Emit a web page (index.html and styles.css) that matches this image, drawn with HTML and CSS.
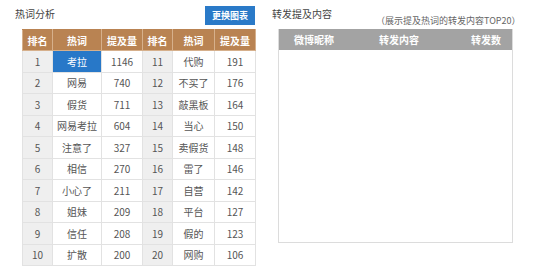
FILE: index.html
```html
<!DOCTYPE html>
<html lang="zh">
<head>
<meta charset="utf-8">
<link rel="stylesheet" href="styles.css">
</head>
<body>
<div class="page">
  <section class="left">
    <div class="lhead">
      <div class="title">热词分析</div>
      <div class="btn">更换图表</div>
    </div>
    <table class="hot">
      <colgroup>
        <col class="c1"><col class="c2"><col class="c3"><col class="c4"><col class="c5"><col class="c6">
      </colgroup>
      <thead>
        <tr><th>排名</th><th>热词</th><th>提及量</th><th>排名</th><th>热词</th><th>提及量</th></tr>
      </thead>
      <tbody>
        <tr><td class="rk">1</td><td class="sel">考拉</td><td>1146</td><td class="rk">11</td><td>代购</td><td>191</td></tr>
        <tr><td class="rk">2</td><td>网易</td><td>740</td><td class="rk">12</td><td>不买了</td><td>176</td></tr>
        <tr><td class="rk">3</td><td>假货</td><td>711</td><td class="rk">13</td><td>敲黑板</td><td>164</td></tr>
        <tr><td class="rk">4</td><td>网易考拉</td><td>604</td><td class="rk">14</td><td>当心</td><td>150</td></tr>
        <tr><td class="rk">5</td><td>注意了</td><td>327</td><td class="rk">15</td><td>卖假货</td><td>148</td></tr>
        <tr><td class="rk">6</td><td>相信</td><td>270</td><td class="rk">16</td><td>雷了</td><td>146</td></tr>
        <tr><td class="rk">7</td><td>小心了</td><td>211</td><td class="rk">17</td><td>自营</td><td>142</td></tr>
        <tr><td class="rk">8</td><td>姐妹</td><td>209</td><td class="rk">18</td><td>平台</td><td>127</td></tr>
        <tr><td class="rk">9</td><td>信任</td><td>208</td><td class="rk">19</td><td>假的</td><td>123</td></tr>
        <tr><td class="rk">10</td><td>扩散</td><td>200</td><td class="rk">20</td><td>网购</td><td>106</td></tr>
      </tbody>
    </table>
  </section>
  <section class="right">
    <div class="rhead">
      <div class="title rtitle">转发提及内容</div>
      <div class="sub">（展示提及热词的转发内容TOP20）</div>
    </div>
    <div class="box">
      <div class="bhead">
        <span class="h1">微博昵称</span>
        <span class="h2">转发内容</span>
        <span class="h3">转发数</span>
      </div>
    </div>
  </section>
</div>
</body>
</html>
```

FILE: styles.css
```css
html, body {
  margin: 0;
  padding: 0;
  background: #fff;
}
body {
  font-family: "Noto Sans CJK SC", "Noto Sans", sans-serif;
  color: #555;
  font-size: 10px;
}
.page {
  display: flex;
  align-items: flex-start;
}
.left {
  width: 240px;
  padding-left: 15px;
}
.lhead {
  display: flex;
  align-items: flex-start;
  justify-content: space-between;
  height: 29px;
}
.title {
  margin-top: 8px;
  line-height: 12px;
  font-size: 10px;
  color: #444;
}
.btn {
  margin-top: 6px;
  width: 50px;
  height: 19px;
  line-height: 19px;
  text-align: center;
  background: #2a7ac8;
  color: #fff;
  font-size: 9px;
  font-weight: bold;
}
.hot {
  margin-left: 7px;
  width: 233px;
  border-collapse: collapse;
  table-layout: fixed;
}
.c1 { width: 30px; }
.c2 { width: 49px; }
.c3 { width: 41px; }
.c4 { width: 30px; }
.c5 { width: 42px; }
.c6 { width: 41px; }
.hot th, .hot td {
  border: 1px solid #e2e2e2;
  padding: 0;
  text-align: center;
  font-size: 10px;
}
.hot thead tr {
  height: 21px;
}
.hot th {
  background: #b98352;
  color: #fff;
  font-weight: bold;
  border-color: #d6b08c;
  border-top-color: #b98352;
}
.hot tbody tr {
  height: 21.5px;
}
.hot td {
  color: #555;
  background: #fff;
}
.hot td.rk {
  background: #efefef;
}
.hot td.sel {
  background: #2878c8;
  color: #fff;
}
.right {
  margin-left: 17px;
  width: 250px;
}
.rhead {
  display: flex;
  align-items: flex-start;
  height: 29px;
}
.rtitle {
  width: 108px;
  flex: none;
}
.sub {
  margin-top: 15px;
  line-height: 11px;
  font-size: 9px;
  color: #666;
  white-space: nowrap;
  margin-left: -4px;
}
.box {
  margin-left: 6px;
  width: 233px;
  height: 213px;
  border: 1px solid #dcdcdc;
  border-top: none;
}
.bhead {
  display: grid;
  grid-template-columns: 70px 100px 1fr;
  height: 21px;
  line-height: 21px;
  background: #a3a3a3;
  color: #fff;
  font-weight: bold;
  font-size: 10px;
}
.h1, .h2 {
  text-align: center;
}
.h3 {
  text-align: right;
  padding-right: 11px;
}
```
